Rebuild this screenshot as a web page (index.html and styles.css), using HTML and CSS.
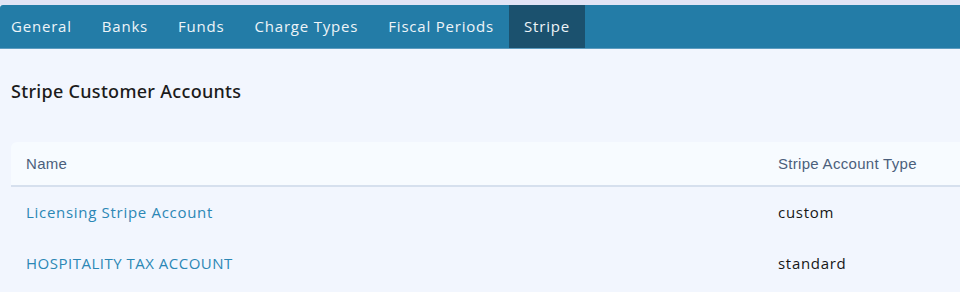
FILE: index.html
```html
<!DOCTYPE html>
<html lang="en">
<head>
    <meta charset="UTF-8">
    <meta name="viewport" content="width=device-width, initial-scale=1.0">
    <title>Stripe</title>
    <link rel="stylesheet" href="styles.css">
</head>
<body>
    <div class="topstrip"></div>
    <nav class="tabs">
        <a class="tab first">General</a>
        <a class="tab">Banks</a>
        <a class="tab">Funds</a>
        <a class="tab">Charge Types</a>
        <a class="tab">Fiscal Periods</a>
        <a class="tab active">Stripe</a>
    </nav>

    <div class="content">
        <h3 class="title">Stripe Customer Accounts</h3>

        <table class="accounts">
            <thead>
                <tr>
                    <th class="col-name">Name</th>
                    <th>Stripe Account Type</th>
                </tr>
            </thead>
            <tbody>
                <tr>
                    <td><a class="link">Licensing Stripe Account</a></td>
                    <td>custom</td>
                </tr>
                <tr>
                    <td><a class="link caps">HOSPITALITY TAX ACCOUNT</a></td>
                    <td>standard</td>
                </tr>
            </tbody>
        </table>
    </div>
</body>
</html>
```

FILE: styles.css
```css
/* ===== General ===== */
body {
    margin: 0;
    background: #f2f6fe;
    font-family: "Open Sans", sans-serif;
    overflow: hidden;
}

.topstrip {
    height: 5px;
    background: #e1e4f5;
}

/* ===== Tabs ===== */
.tabs {
    display: flex;
    height: 43px;
    background: #237ca7;
    border-top-left-radius: 3px;
    border-bottom: 1px solid #5c9cc0;
}

.tab {
    display: flex;
    align-items: center;
    padding: 0 15px 1px;
    color: #eef4f8;
    font-size: 15px;
    letter-spacing: 0.8px;
    cursor: pointer;
}

.tab.first {
    padding-left: 11px;
}

.tab.active {
    background: #1b516e;
}

/* ===== Content ===== */
.content {
    padding: 0 0 0 11px;
}

.title {
    margin: 0;
    padding: 30px 0 39px;
    font-family: "Noto Sans", sans-serif;
    font-size: 18px;
    font-weight: 500;
    letter-spacing: 0.3px;
    color: #1b1b1b;
}

.accounts {
    width: 1000px;
    border-collapse: collapse;
}

.accounts thead th {
    height: 43px;
    padding: 0 15px;
    text-align: left;
    font-family: "Liberation Sans", Arial, sans-serif;
    font-size: 15px;
    font-weight: normal;
    letter-spacing: 0.3px;
    color: #4b5f7c;
    background: #f7fbff;
    border-bottom: 2px solid #d6e0ee;
}

.accounts thead th.col-name {
    width: 722px;
    border-top-left-radius: 6px;
}

.accounts td {
    height: 49px;
    padding: 0 15px 2px;
    font-size: 15px;
    letter-spacing: 0.7px;
    color: #161616;
}

.link {
    color: #2b87b5;
    cursor: pointer;
}

.link.caps {
    letter-spacing: 0.5px;
}
```
